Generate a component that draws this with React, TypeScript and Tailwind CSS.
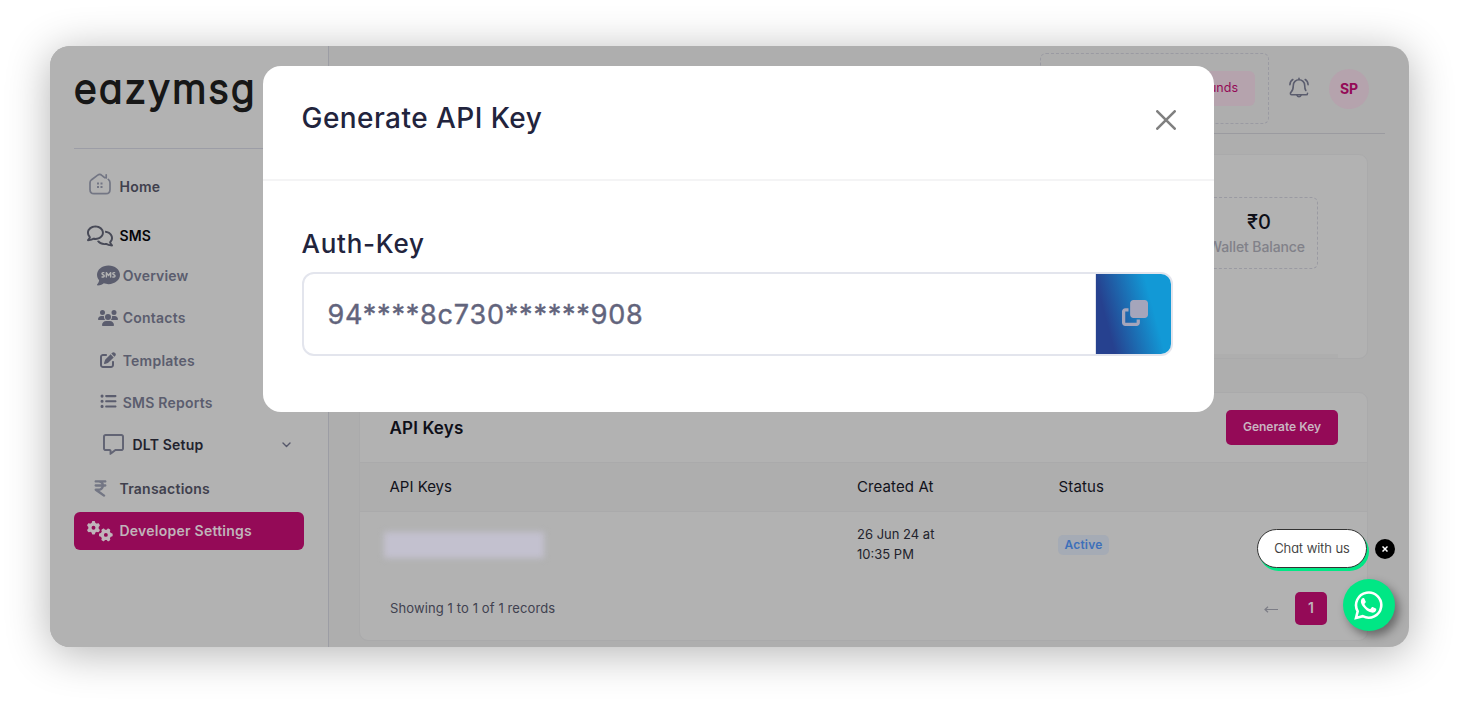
import React from "react";
import {
  FaRegComments,
  FaCommentSms,
  FaUsers,
  FaPenToSquare,
  FaListUl,
  FaRegMessage,
  FaIndianRupeeSign,
  FaGears,
  FaClone,
} from "react-icons/fa6";

function HomeIcon() {
  return (
    <svg width="22" height="22" viewBox="0 0 22 22" fill="none" stroke="currentColor" strokeWidth="1.7" strokeLinecap="round" strokeLinejoin="round">
      <path d="M15.6 4.7 12.8 2.3C11.6 1.2 9.9 1.2 8.7 2.1L2.6 6.7C1.6 7.5 1 8.6 1 9.8v6.6C1 19 2.7 20.6 5 20.6h12c2.4 0 4-1.6 4-4.2V9.8c0-1.3-.6-2.6-1.7-3.4M17.2 5V1.8" />
      <g fill="currentColor" stroke="none">
        <rect x="8" y="9.5" width="2" height="2" />
        <rect x="11.5" y="9.5" width="2" height="2" />
        <rect x="8" y="13" width="2" height="2" />
        <rect x="11.5" y="13" width="2" height="2" />
      </g>
    </svg>
  );
}

function BellIcon() {
  return (
    <svg width="20" height="22" viewBox="0 0 20 22" fill="none" stroke="currentColor" strokeWidth="1.6" strokeLinecap="round" strokeLinejoin="round">
      <path d="M10 1.2v1.6M16.8 13.5C16 12.3 15.7 10.7 15.7 8.4 15.7 5.2 13.2 2.8 10 2.8S4.3 5.2 4.3 8.4c0 4-1.1 5.7-2.4 6.9-.9.9-.5 2.5.9 2.5h14.4c.9 0 1.3-.6 1.3-1.4" />
      <path d="M8 18.2a2.1 2.1 0 0 0 4 0M3.8 2.5C2 3.6 1 5.4.9 7.7M16.2 2.5c1.8 1.1 2.8 2.9 2.9 5.2" />
    </svg>
  );
}

function WhatsappIcon() {
  return (
    <svg width="29" height="29" viewBox="0 0 29 29" fill="none">
      <path d="M2 27 3.7 20.3A12.6 12.6 0 1 1 8.7 25.2L2 27Z" stroke="#fff" strokeWidth="2.6" />
      <path d="M10.3 7.6c-.3-.6-.6-.6-1-.6-1 0-2.4 1.2-2.4 3.4 0 1.5.7 3.1 2.1 5 2.3 3 5 5.3 8.7 6.2 1.8.4 4.6-.9 4.6-3.2 0-.4-.1-.6-.5-.8l-3.1-1.5c-.4-.2-.7-.1-.9.2l-1.2 1.5c-.3.3-.5.4-.9.2-2.2-.9-3.9-2.4-5.1-4.5-.2-.4-.1-.6.1-.9l.9-1.2c.2-.3.2-.5.1-.8l-1.400-3Z" fill="#fff" />
    </svg>
  );
}

type NavProps = {
  label: string;
  row: string;
  iconBox: string;
  text: string;
  children: React.ReactNode;
  after?: React.ReactNode;
};

function NavItem({ label, row, iconBox, text, children, after }: NavProps) {
  return (
    <a className={`flex shrink-0 items-center ${row}`}>
      <span className={`flex shrink-0 items-center ${iconBox}`}>{children}</span>
      <span className={`text-[14px] leading-5 whitespace-nowrap ${text}`}>{label}</span>
      {after}
    </a>
  );
}

function Sidebar() {
  return (
    <aside className="flex w-[279px] shrink-0 flex-col border-r border-[#9c9da4] bg-[#b2b2b2] pl-6">
      <div className="flex h-[103px] shrink-0 items-start border-b border-[#9c9da6] pt-[18px]">
        <span className="text-[39px] leading-[50px] font-light tracking-[2.3px] text-[#171717] [-webkit-text-stroke:1.8px_#171717] [stroke-linejoin:round] [font-feature-settings:'cv11']">
          eazymsg
        </span>
      </div>
      <nav className="flex w-[230px] flex-col pt-[17px]">
        <NavItem label="Home" row="h-[42px]" iconBox="w-[45.5px] pl-[15px] pb-1.5 text-[#737684]" text="font-semibold tracking-[0.25px] text-[#40404d]"><HomeIcon /></NavItem>
        <NavItem label="SMS" row="mt-[7px] h-[42px]" iconBox="w-[45.5px] pl-[13px] pb-px text-[#484a57]" text="font-semibold tracking-[0.1px] text-[#050509]"><FaRegComments size={26} /></NavItem>
        <NavItem label="Overview" row="h-[38px]" iconBox="w-[48.7px] pl-[22.5px] pb-px text-[#5b5d6e]" text="font-semibold tracking-[0.15px] text-[#5b5d6e]"><FaCommentSms size={23} /></NavItem>
        <NavItem label="Contacts" row="h-[46px]" iconBox="w-[48.7px] pl-[24px] text-[#5b5d6e]" text="font-semibold tracking-[0.23px] text-[#5b5d6e]"><FaUsers size={20} /></NavItem>
        <NavItem label="Templates" row="h-10" iconBox="w-[48.7px] pl-[26px] pb-0.5 text-[#5b5d6e]" text="font-semibold tracking-[0.23px] text-[#5b5d6e]"><FaPenToSquare size={16} /></NavItem>
        <NavItem label="SMS Reports" row="h-11" iconBox="w-[48.7px] pl-[26px] pb-[3px] text-[#5b5d6e]" text="font-semibold tracking-[0.23px] text-[#5b5d6e]"><FaListUl size={16.500} /></NavItem>
        <NavItem
          label="DLT Setup"
          row="h-10"
          iconBox="w-[58.5px] pl-[29px] pb-0.5 text-[#626474]"
          text="font-semibold tracking-[0.2px] text-[#22222e]"
          after={
            <svg className="mr-[13px] ml-auto" width="9" height="6" viewBox="0 0 9 6" fill="none" stroke="#55576a" strokeWidth="1.4" strokeLinecap="round" strokeLinejoin="round"><path d="m1 1 3.5 3.5L8 1" /></svg>
          }
        ><FaRegMessage size={21} /></NavItem>
        <NavItem label="Transactions" row="mt-px h-[46px]" iconBox="w-[45.5px] pl-[16.5px] pb-0.5 text-[#737684]" text="font-semibold tracking-[0.23px] text-[#40404d]"><FaIndianRupeeSign size={19} /></NavItem>
        <NavItem label="Developer Settings" row="h-[38px] rounded-[6px] bg-[#940a57]" iconBox="w-[45.5px] pl-[13px] pb-px text-[#c0b4ba]" text="font-semibold tracking-[0.24px] text-[#c0b4ba]"><FaGears size={26} /></NavItem>
      </nav>
    </aside>
  );
}

function TopBar() {
  return (
    <header className="mr-6 flex h-[88px] shrink-0 items-start justify-end border-b border-[#9b9ba0]">
      <div className="mt-[7px] flex h-[71px] w-[229px] items-center justify-end rounded-[6px] border border-dashed border-[#9a9aa2] pr-[13px]">
        <button className="h-[35px] w-[108px] rounded-[6px] bg-[#b5a3ad] pr-[17px] text-right text-[12.5px] text-[#940a57]">Add Funds</button>
      </div>
      <span className="mt-[31px] ml-5 text-[#5b5d6e]"><BellIcon /></span>
      <span className="mt-[23px] mr-4 ml-5 flex size-10 items-center justify-center rounded-full bg-[#b5a3ad] pb-0.5 text-[14px] font-bold text-[#940a57]">SP</span>
    </header>
  );
}

function BalanceCard() {
  return (
    <section className="mt-5 flex h-[205px] shrink-0 flex-col items-end rounded-[9px] border border-[#aaaaab] bg-[#b2b2b2] pt-[42px]">
      <div className="mr-[49px] flex h-[72px] w-[120px] flex-col items-center rounded-[6px] border border-dashed border-[#9a9aa2] pt-[9px]">
        <span className="pl-0.5 text-[20px] leading-[30px] font-medium text-[#0e0f18]">₹0</span>
        <span className="pr-[3px] text-[14px] leading-5 font-medium tracking-[-0.1px] whitespace-nowrap text-[#818189]">Wallet Balance</span>
      </div>
      <div className="mt-auto mr-[29px] h-1 w-[948px] bg-[#aeaeae]" />
    </section>
  );
}

function KeysCard() {
  return (
    <section className="mt-[33px] flex h-[249px] shrink-0 flex-col rounded-[9px] border border-[#aaaaab] bg-[#b2b2b2]">
      <div className="flex h-[69px] shrink-0 items-center justify-between pr-[29px] pl-[29.5px]">
        <h2 className="pt-0.5 text-[17px] font-semibold tracking-[0.15px] text-[#0e0f18]">API Keys</h2>
        <button className="h-[35px] w-[112px] rounded-[5px] bg-[#940a57] pb-0.5 text-[12px] font-semibold text-[#c9b5c0]">Generate Key</button>
      </div>
      <div className="flex h-[50px] shrink-0 items-center border-y border-[#aaaaab] bg-[#aeaeae] pl-[29.5px] text-[15px] text-[#12131c]">
        <span className="w-[467.5px]">API Keys</span>
        <span className="w-[201.5px] tracking-[0.1px]">Created At</span>
        <span className="tracking-[0.15px]">Status</span>
      </div>
      <div className="flex h-[66px] shrink-0 items-center pl-[24px]">
        <span className="h-[26px] w-[160px] bg-[#c3c1cf] blur-[3px]" />
        <span className="ml-[313px] w-[201px] pb-0.5 text-[13px] leading-5 text-[#22232c]">26 Jun 24 at<br />10:35 PM</span>
        <span className="flex h-5 w-[51px] items-center justify-center rounded-[5px] bg-[#a5abb5] text-[12px] font-semibold tracking-[0.2px] text-[#3d70ba]">Active</span>
      </div>
      <div className="flex grow items-center pr-10 pb-px pl-[30px]">
        <span className="text-[13px] tracking-[0.11px] text-[#40414f]">Showing 1 to 1 of 1 records</span>
        <svg className="ml-auto" width="14" height="8" viewBox="0 0 14 8" fill="none" stroke="#7c7d86" strokeWidth="1.2"><path d="M14 4.5H1M4 1.7 1 4.5l3 2.8" /></svg>
        <span className="ml-[17px] flex h-[33px] w-8 items-center justify-center rounded-[5px] bg-[#940a57] pb-0.5 text-[14px] font-semibold text-[#c0b4ba]">1</span>
      </div>
    </section>
  );
}

function Modal() {
  return (
    <div className="absolute top-[66px] left-[263px] flex h-[346px] w-[951.4px] flex-col rounded-[18px] bg-white">
      <div className="flex h-[115px] shrink-0 items-center justify-between border-b-2 border-[#f4f4f5] pr-[38.4px] pb-[9px] pl-[38.500px]">
        <h1 className="text-[28px] leading-10 font-medium tracking-[0.45px] text-[#22243d]">Generate API Key</h1>
        <svg className="mt-[3px]" width="20" height="20" viewBox="0 0 20 20" fill="none" stroke="#808080" strokeWidth="2.6" strokeLinecap="round"><path d="m1.3 1.3 17.400 17.400M18.700 1.300 1.300 18.700" /></svg>
      </div>
      <div className="flex flex-col pt-[45px] pr-[41.4px] pl-[38.5px]">
        <label className="text-[26px] leading-9 font-medium tracking-[0.75px] text-[#22243d]">Auth-Key</label>
        <div className="mt-[10px] flex h-[84px] overflow-hidden rounded-[12px] border-2 border-[#e3e5ed]">
          <div className="flex grow items-center pt-0.5 pl-[24px] text-[27px] tracking-[0.8px] text-[#62647c] [-webkit-text-stroke:0.4px_#62647c]">94****8c730******908</div>
          <button className="flex w-[76px] items-center justify-center border-l border-[#e1e3ec] bg-[linear-gradient(75deg,#26418f_20%,#1299d6_72%)] pb-0.5 pl-0.5 text-[#a5a5bb]">
            <FaClone size={26} />
          </button>
        </div>
      </div>
    </div>
  );
}

function ChatWidget() {
  return (
    <>
      <div className="absolute top-[529px] left-[1257px] flex h-[39px] w-[110px] items-center justify-center rounded-full border border-[#333] bg-white text-[13px] font-light whitespace-nowrap text-[#333] shadow-[2px_3px_0_#00e785] [-webkit-text-stroke:0.150px_#333] [font-feature-settings:'cv11']">
        Chat with us
      </div>
      <div className="absolute top-[539px] left-[1375px] flex size-5 items-center justify-center rounded-full bg-black">
        <svg width="6" height="6" viewBox="0 0 6 6" stroke="#fff" strokeWidth="1.5"><path d="m.5.5 5 5M5.5.5l-5 5" /></svg>
      </div>
      <div className="absolute top-[579px] left-[1343px] flex size-[52px] items-center justify-center rounded-full bg-[#00e785] pr-px shadow-[4px_5px_10px_rgba(0,0,0,0.4)]">
        <WhatsappIcon />
      </div>
    </>
  );
}

export default function App() {
  return (
    <div className="relative h-[701px] w-[1459px] overflow-hidden bg-white px-[50px] pt-[46px] font-['Inter',sans-serif]">
      <div className="flex h-[601px] overflow-hidden rounded-[20px] bg-[#aeaeae] shadow-[0_6px_44px_rgba(0,0,0,0.3)]">
        <Sidebar />
        <main className="flex min-w-0 grow flex-col">
          <TopBar />
          <div className="flex flex-col pr-[41px] pl-[30px]">
            <BalanceCard />
            <KeysCard />
          </div>
        </main>
      </div>
      <Modal />
      <ChatWidget />
    </div>
  );
}
